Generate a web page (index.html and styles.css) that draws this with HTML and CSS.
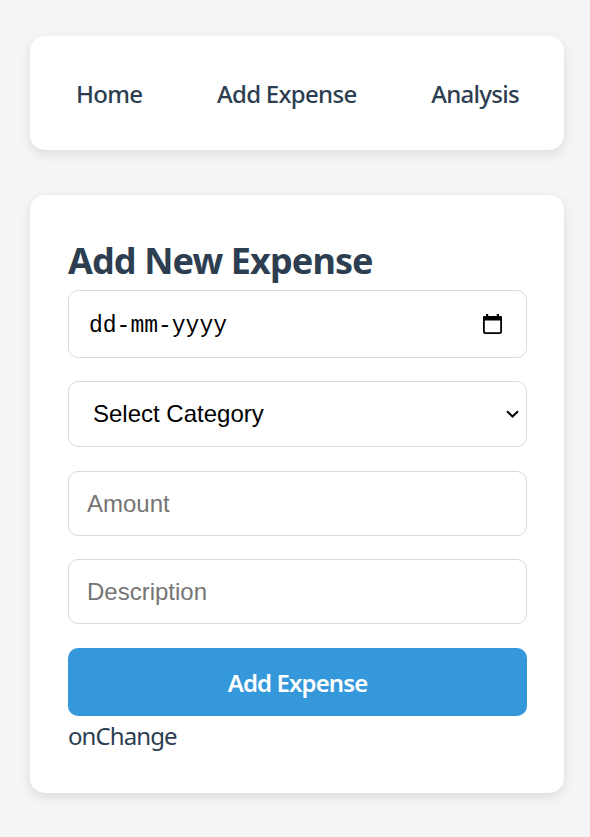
FILE: index.html
```html
<!DOCTYPE html>
<html lang="en">
<head>
<meta charset="utf-8">
<title>Expense Tracker</title>
<link rel="stylesheet" href="styles.css">
</head>
<body>
<div class="app">
  <nav class="card navbar">
    <a class="nav-link" href="#">Home</a>
    <a class="nav-link" href="#">Add Expense</a>
    <a class="nav-link" href="#">Analysis</a>
  </nav>
  <main class="card form-card">
    <h2 class="title">Add New Expense</h2>
    <form class="expense-form">
      <div class="field date-field">
        <span class="date-text">dd-mm-yyyy</span>
        <svg class="cal-icon" width="19" height="20" viewBox="0 0 19 20" aria-hidden="true">
          <path d="M3 0h2.2v3H3zM13.8 0H16v3h-2.2z" fill="#000"/>
          <rect x="0.9" y="2.9" width="17.2" height="16.2" rx="1.6" fill="none" stroke="#000" stroke-width="1.8"/>
          <rect x="0" y="2" width="19" height="4.4" rx="1.4" fill="#000"/>
        </svg>
      </div>
      <div class="field select-field">
        <span class="select-text">Select Category</span>
        <svg class="chevron" width="13" height="8" viewBox="0 0 13 8" aria-hidden="true">
          <path d="M1 1.2l5.5 5.3 5.5-5.3" fill="none" stroke="#000" stroke-width="2"/>
        </svg>
      </div>
      <input class="field text-input spaced" type="number" placeholder="Amount">
      <input class="field text-input" type="text" placeholder="Description">
      <button class="submit-btn spaced" type="button">Add Expense</button>
    </form>
    <p class="status">onChange</p>
  </main>
</div>
</body>
</html>
```
FILE: styles.css
```css
* { box-sizing: border-box; }

body {
  margin: 0;
  background: #f4f5f7;
  font-family: "Noto Sans", "Open Sans", sans-serif;
  color: #2c3e50;
}

.app {
  padding: 36px 26px 45px 30px;
  display: flex;
  flex-direction: column;
  gap: 45px;
}

.card {
  background: #ffffff;
  border-radius: 15px;
  box-shadow: 0 4px 12px rgba(0, 0, 0, 0.1);
}

.navbar {
  height: 114px;
  display: flex;
  align-items: center;
  justify-content: space-between;
  padding: 0 45px 0 46px;
}

.nav-link {
  font-size: 24px;
  font-weight: 500;
  letter-spacing: -0.7px;
  color: #2c3e50;
  text-decoration: none;
}

.form-card {
  padding: 43px 37px 41px 38px;
}

.title {
  margin: 0 0 6px;
  font-size: 36px;
  line-height: 46px;
  font-weight: 700;
  letter-spacing: -0.9px;
  color: #2c3e50;
}

.expense-form {
  display: flex;
  flex-direction: column;
  gap: 23px;
}

.spaced {
  margin-top: 1px;
}

.field {
  width: 100%;
  height: 65px;
  border: 1px solid #d3dae3;
  border-radius: 10px;
  background: #fff;
  font-family: "Liberation Sans", Arial, sans-serif;
  font-size: 24px;
}

.date-field {
  height: 68px;
  display: flex;
  align-items: center;
  justify-content: space-between;
  padding: 3px 24px 0 20px;
}

.date-text {
  font-family: "Liberation Mono", "DejaVu Sans Mono", monospace;
  font-size: 23px;
  color: #000;
}

.cal-icon {
  margin-top: -3px;
}

.select-field {
  height: 66px;
  display: flex;
  align-items: center;
  justify-content: space-between;
  padding: 0 7px 0 24px;
  color: #000;
}

.text-input {
  padding: 0 18px;
  color: #000;
  outline: none;
}

.text-input::placeholder {
  color: #757575;
}

.submit-btn {
  height: 68px;
  border: none;
  border-radius: 10px;
  background: #3498db;
  color: #fff;
  font-family: "Noto Sans", "Open Sans", sans-serif;
  font-size: 24px;
  font-weight: 600;
  letter-spacing: -0.9px;
}

.status {
  margin: 4px 0 0;
  font-size: 24px;
  line-height: 32px;
  letter-spacing: -0.9px;
  color: #2c3e50;
}
```
